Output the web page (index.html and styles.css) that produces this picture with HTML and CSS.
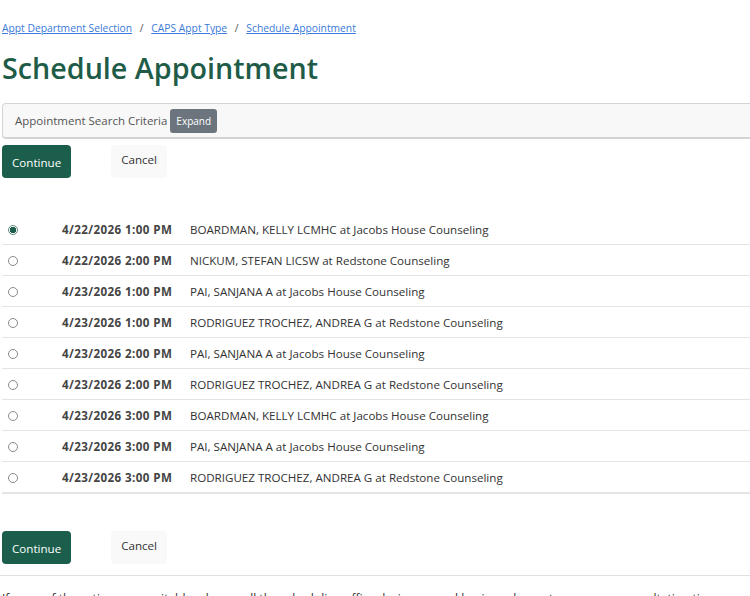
FILE: index.html
```html
<!DOCTYPE html>
<html lang="en">
<head>
    <meta charset="UTF-8">
    <meta name="viewport" content="width=device-width, initial-scale=1.0">
    <title>Schedule Appointment</title>
    <link rel="stylesheet" href="styles.css">
</head>
<body>
    <div id="page">
        <nav class="crumbs">
            <a href="#">Appt Department Selection</a>
            <span class="sep">/</span>
            <a href="#">CAPS Appt Type</a>
            <span class="sep">/</span>
            <a href="#">Schedule Appointment</a>
        </nav>

        <h1>Schedule Appointment</h1>

        <div class="criteria">
            <span>Appointment Search Criteria</span>
            <span class="badge">Expand</span>
        </div>

        <div class="actions">
            <button class="btn btn-go">Continue</button>
            <button class="btn btn-cancel">Cancel</button>
        </div>

        <table class="slots">
            <tr>
                <td class="pick"><input type="radio" name="slot" checked></td>
                <td class="when">4/22/2026 1:00 PM</td>
                <td>BOARDMAN, KELLY LCMHC at Jacobs House Counseling</td>
            </tr>
            <tr>
                <td class="pick"><input type="radio" name="slot"></td>
                <td class="when">4/22/2026 2:00 PM</td>
                <td>NICKUM, STEFAN LICSW at Redstone Counseling</td>
            </tr>
            <tr>
                <td class="pick"><input type="radio" name="slot"></td>
                <td class="when">4/23/2026 1:00 PM</td>
                <td>PAI, SANJANA A at Jacobs House Counseling</td>
            </tr>
            <tr>
                <td class="pick"><input type="radio" name="slot"></td>
                <td class="when">4/23/2026 1:00 PM</td>
                <td>RODRIGUEZ TROCHEZ, ANDREA G at Redstone Counseling</td>
            </tr>
            <tr>
                <td class="pick"><input type="radio" name="slot"></td>
                <td class="when">4/23/2026 2:00 PM</td>
                <td>PAI, SANJANA A at Jacobs House Counseling</td>
            </tr>
            <tr>
                <td class="pick"><input type="radio" name="slot"></td>
                <td class="when">4/23/2026 2:00 PM</td>
                <td>RODRIGUEZ TROCHEZ, ANDREA G at Redstone Counseling</td>
            </tr>
            <tr>
                <td class="pick"><input type="radio" name="slot"></td>
                <td class="when">4/23/2026 3:00 PM</td>
                <td>BOARDMAN, KELLY LCMHC at Jacobs House Counseling</td>
            </tr>
            <tr>
                <td class="pick"><input type="radio" name="slot"></td>
                <td class="when">4/23/2026 3:00 PM</td>
                <td>PAI, SANJANA A at Jacobs House Counseling</td>
            </tr>
            <tr>
                <td class="pick"><input type="radio" name="slot"></td>
                <td class="when">4/23/2026 3:00 PM</td>
                <td>RODRIGUEZ TROCHEZ, ANDREA G at Redstone Counseling</td>
            </tr>
        </table>

        <div class="actions">
            <button class="btn btn-go">Continue</button>
            <button class="btn btn-cancel">Cancel</button>
        </div>

        <hr>

        <p class="note">If none of these times are suitable, please call the scheduling office during normal business hours to arrange a consultation time.</p>
    </div>
</body>
</html>
```

FILE: styles.css
```css
/* Page */
body {
    margin: 0;
    font-family: "Open Sans", "Noto Sans", sans-serif;
    font-size: 11.6px;
    color: #333;
    background: #fff;
    overflow: hidden;
}

#page {
    width: 770px;
    padding: 20px 0 0 2px;
}

.crumbs {
    font-size: 10.3px;
    color: #555;
    line-height: 16px;
}

.crumbs a {
    color: #3b7bd9;
}

.crumbs .sep {
    margin: 0 5px;
}

h1 {
    margin: 14px 0 17px 0;
    font-size: 28.7px;
    font-weight: 600;
    line-height: 36px;
    color: #1f5c48;
}

/* Search criteria bar */
.criteria {
    display: flex;
    align-items: center;
    gap: 3px;
    height: 33px;
    padding: 0 12px;
    background: #f8f8f8;
    border: 1px solid #d4d4d4;
    border-bottom-width: 2px;
    border-radius: 4px;
    color: #555;
    font-size: 11.5px;
}

.badge {
    background: #6c757d;
    color: #fff;
    font-size: 10px;
    padding: 5px 6px;
    border-radius: 3px;
}

/* Buttons */
.actions {
    display: flex;
    align-items: flex-start;
    gap: 40px;
    margin-top: 6px;
}

.btn {
    font-family: inherit;
    font-size: 11.6px;
    border: none;
    border-radius: 4px;
    height: 33px;
    padding: 0 10px;
    cursor: pointer;
}

.btn-go {
    background: #1b5e4b;
    color: #fff;
    padding-top: 2px;
}

.btn-cancel {
    background: #f9f9fa;
    color: #333;
    padding-bottom: 4px;
}

/* Slots table */
.slots {
    width: 100%;
    border-collapse: collapse;
    margin-top: 36px;
}

.slots td {
    height: 30px;
    padding: 0;
    border-bottom: 1px solid #e4e4e4;
    white-space: nowrap;
}

.slots tr:last-child td {
    border-bottom-width: 2px;
}

.slots .pick {
    width: 54px;
    padding-left: 6px;
}

.slots .when {
    width: 128px;
    font-weight: 700;
    color: #444;
    letter-spacing: 0.4px;
}

.slots input {
    appearance: none;
    width: 10px;
    height: 10px;
    margin: 0;
    border: 1px solid #8a8a8a;
    border-radius: 50%;
    vertical-align: middle;
}

.slots input:checked {
    border-color: #5f8a7b;
    background: radial-gradient(circle, #1b5e4b 0 3px, #fff 3.5px);
}

.slots + .actions {
    margin-top: 37px;
}

hr {
    border: none;
    border-top: 1px solid #e0e0e0;
    margin: 11px 0 0 -2px;
}

.note {
    margin: 14px 0 0 0;
    color: #333;
    font-size: 12px;
    line-height: 18px;
}
```
